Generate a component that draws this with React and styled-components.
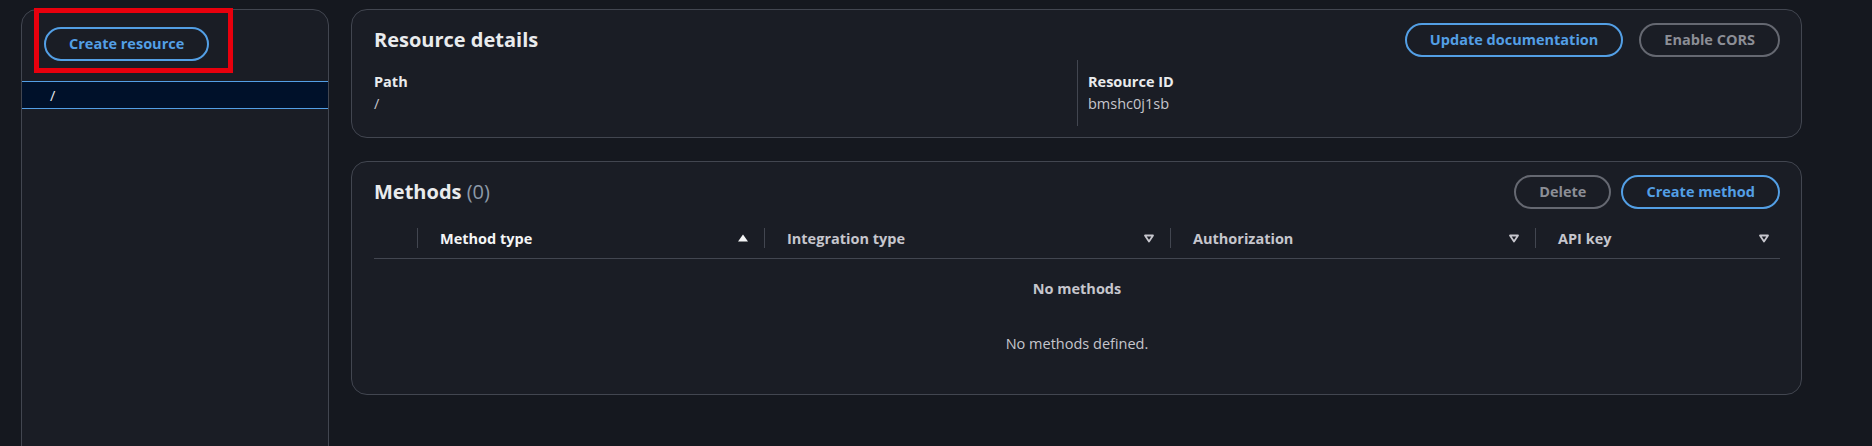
import React from "react";
import styled, { createGlobalStyle } from "styled-components";

const BLUE = "#539fe5";
const BORDER = "#424650";
const PANEL = "#1a1d25";
const PAGE = "#15181f";

const GlobalStyle = createGlobalStyle`
  html, body {
    margin: 0;
    background: ${PAGE};
    font-family: "Open Sans", "Noto Sans", sans-serif;
    -webkit-font-smoothing: antialiased;
  }
  * { box-sizing: border-box; }
`;

const Page = styled.div`
  position: relative;
  display: flex;
  gap: 22px;
  height: 446px;
  padding: 9px 70px 0 21px;
  overflow: hidden;
`;

const SidePanel = styled.div`
  flex-shrink: 0;
  width: 308px;
  height: 480px;
  padding-top: 17px;
  background: ${PANEL};
  border: 1px solid ${BORDER};
  border-radius: 16px;
`;

const SideActions = styled.div`
  padding: 0 22px;
`;

const TreeRow = styled.div`
  margin-top: 20px;
  height: 28px;
  padding-left: 28px;
  display: flex;
  align-items: center;
  background: #00112a;
  border-top: 1px solid ${BLUE};
  border-bottom: 1px solid ${BLUE};
  color: #e9ebed;
  font-size: 14.5px;
`;

const Main = styled.div`
  flex: 1;
  display: flex;
  flex-direction: column;
  gap: 23px;
`;

const Container = styled.section`
  background: ${PANEL};
  border: 1px solid ${BORDER};
  border-radius: 16px;
  padding: 13px 21px 11px 22px;
`;

const HeaderRow = styled.div`
  display: flex;
  align-items: center;
  justify-content: space-between;
  min-height: 34px;
`;

const Title = styled.h2`
  margin: 0;
  font-size: 20px;
  line-height: 24px;
  font-weight: 700;
  color: #e9ebed;
`;

const Count = styled.span`
  font-weight: 400;
  color: #8d99a8;
`;

const Actions = styled.div`
  display: flex;
  gap: ${(p) => p.$gap || 10}px;
`;

const Button = styled.button`
  font-family: inherit;
  font-size: 14.5px;
  line-height: 20px;
  font-weight: 700;
  padding: 5px 23px;
  border-radius: 20px;
  background: transparent;
  border: 2px solid ${(p) => (p.$disabled ? "#656871" : BLUE)};
  color: ${(p) => (p.$disabled ? "#8c8e96" : BLUE)};
  cursor: ${(p) => (p.$disabled ? "default" : "pointer")};
  white-space: nowrap;
`;

const Columns = styled.div`
  display: grid;
  grid-template-columns: 1fr 1fr;
  margin-top: 3px;
`;

const Column = styled.div`
  padding: 12px 0 12px ${(p) => (p.$divided ? 10 : 0)}px;
  border-left: ${(p) => (p.$divided ? `1px solid ${BORDER}` : "none")};
`;

const Label = styled.div`
  font-size: 14.5px;
  line-height: 20px;
  font-weight: 700;
  color: #e9ebed;
`;

const Value = styled.div`
  margin-top: 2px;
  font-size: 14.5px;
  line-height: 20px;
  color: #c6c6cd;
`;

const TableHead = styled.div`
  display: grid;
  grid-template-columns: 43px 347px 406px 365px 1fr;
  height: 41px;
  margin-top: 9px;
  border-bottom: 1px solid ${BORDER};
`;

const HeadCell = styled.div`
  position: relative;
  display: flex;
  align-items: center;
  justify-content: space-between;
  padding: 0 ${(p) => (p.$last ? 8 : 13)}px 0 23px;
  font-size: 14.5px;
  font-weight: 700;
  color: ${(p) => (p.$sorted ? "#f4f5f6" : "#c6c6cd")};

  &::before {
    content: "";
    position: absolute;
    left: 0;
    top: 10px;
    width: 1px;
    height: 20px;
    background: ${BORDER};
  }
`;

const EmptyCell = styled.div``;

const Empty = styled.div`
  padding: 20px 0 29px;
  text-align: center;
  color: #c6c6cd;
  font-size: 14.5px;
  line-height: 20px;
`;

const EmptyTitle = styled.div`
  font-weight: 700;
`;

const EmptyText = styled.div`
  margin-top: 35px;
`;

const Highlight = styled.div`
  position: absolute;
  left: 34px;
  top: 8px;
  width: 199px;
  height: 65px;
  border: 5px solid #e8000d;
  pointer-events: none;
`;

const SortIcon = ({ active }) => (
  <svg width="16" height="16" viewBox="0 0 16 16">
    {active ? (
      <path d="M3 11.5h10L8 4.5z" fill="#f4f5f6" />
    ) : (
      <path
        d="M4 5.5h8L8 11.5z"
        fill="none"
        stroke="#c6c6cd"
        strokeWidth="1.8"
        strokeLinejoin="round"
      />
    )}
  </svg>
);

const columns = [
  { name: "Method type", sorted: true },
  { name: "Integration type" },
  { name: "Authorization" },
  { name: "API key" },
];

export default function App() {
  return (
    <>
      <GlobalStyle />
      <Page>
        <SidePanel>
          <SideActions>
            <Button>Create resource</Button>
          </SideActions>
          <TreeRow>/</TreeRow>
        </SidePanel>

        <Main>
          <Container>
            <HeaderRow>
              <Title>Resource details</Title>
              <Actions $gap={16}>
                <Button>Update documentation</Button>
                <Button $disabled>Enable CORS</Button>
              </Actions>
            </HeaderRow>
            <Columns>
              <Column>
                <Label>Path</Label>
                <Value>/</Value>
              </Column>
              <Column $divided>
                <Label>Resource ID</Label>
                <Value>bmshc0j1sb</Value>
              </Column>
            </Columns>
          </Container>

          <Container>
            <HeaderRow>
              <Title>
                Methods <Count>(0)</Count>
              </Title>
              <Actions>
                <Button $disabled>Delete</Button>
                <Button>Create method</Button>
              </Actions>
            </HeaderRow>
            <TableHead>
              <EmptyCell />
              {columns.map((c, i) => (
                <HeadCell key={c.name} $sorted={c.sorted} $last={i === columns.length - 1}>
                  {c.name}
                  <SortIcon active={c.sorted} />
                </HeadCell>
              ))}
            </TableHead>
            <Empty>
              <EmptyTitle>No methods</EmptyTitle>
              <EmptyText>No methods defined.</EmptyText>
            </Empty>
          </Container>
        </Main>

        <Highlight />
      </Page>
    </>
  );
}
